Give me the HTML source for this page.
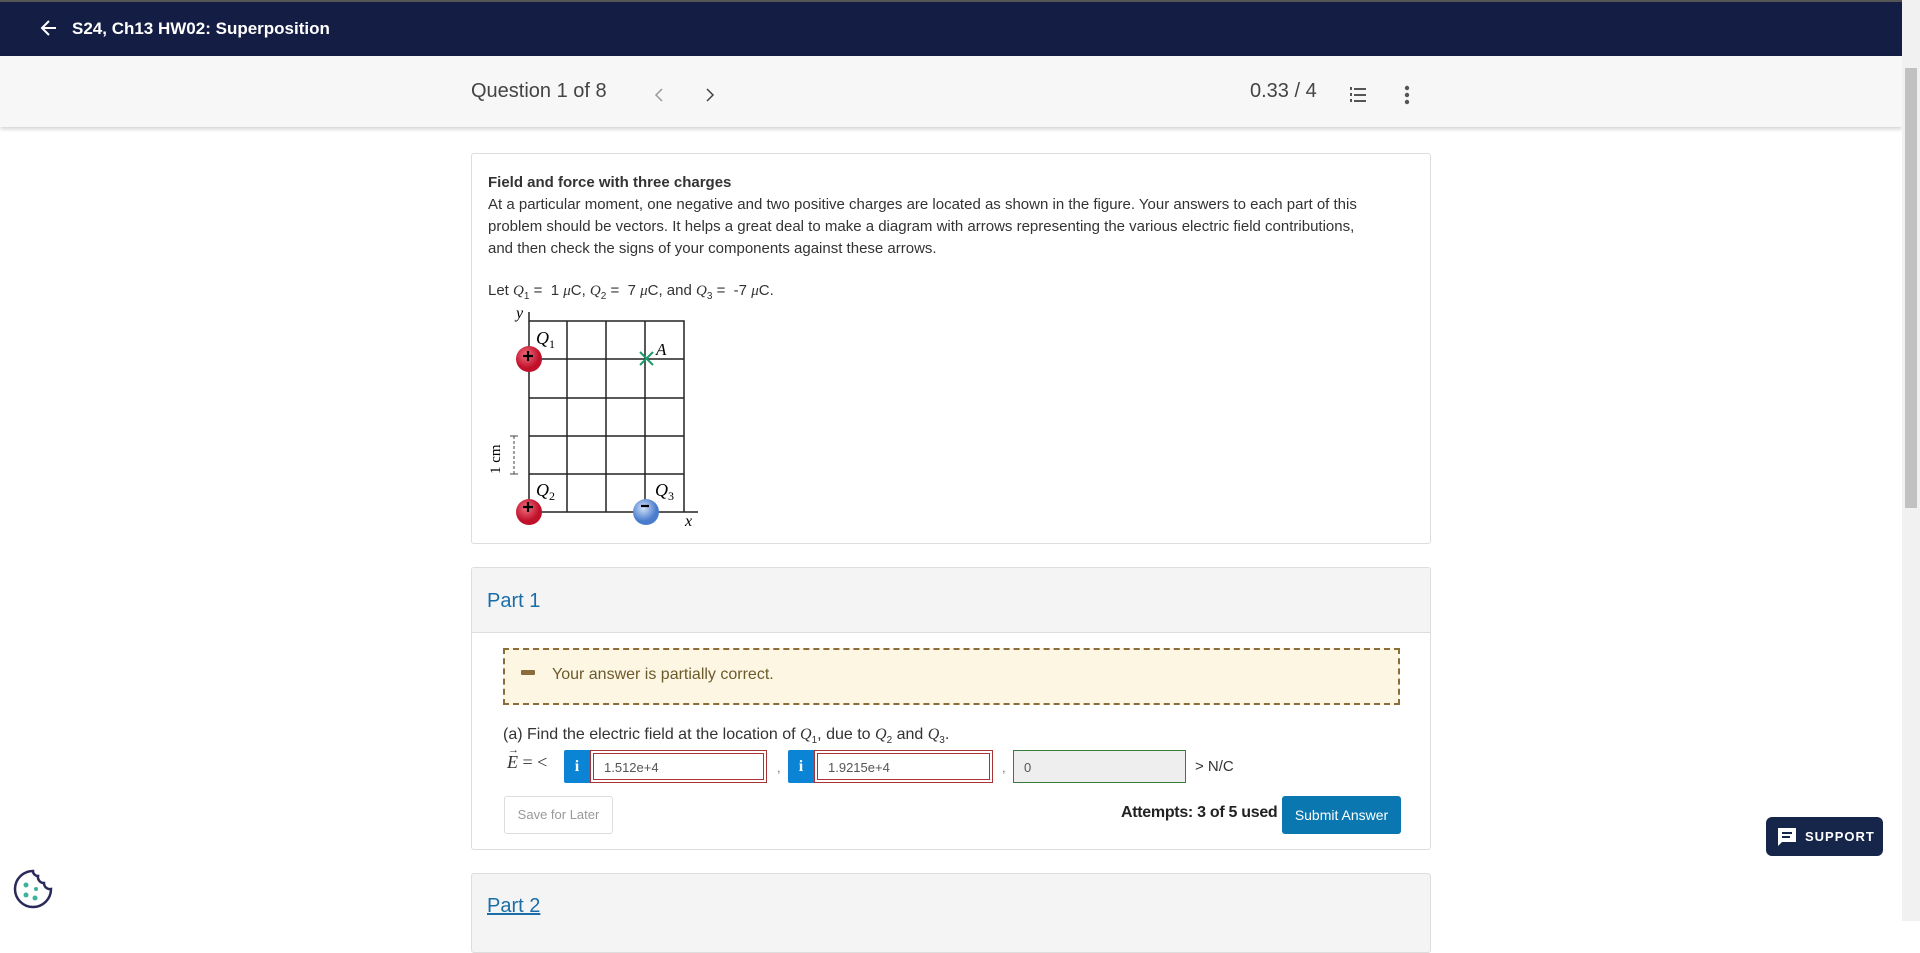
<!DOCTYPE html>
<html><head><meta charset="utf-8"><style>
*{box-sizing:border-box;margin:0;padding:0}
body{width:1920px;height:921px;overflow:hidden;background:#fff;font-family:"Liberation Sans",sans-serif;color:#333;position:relative}
.nav{position:absolute;left:0;top:0;width:1902px;height:56px;background:#141e44;border-top:2px solid #555}
.nav .t{position:absolute;left:72px;top:17px;color:#fff;font-weight:bold;font-size:17px}
.sub{position:absolute;left:0;top:56px;width:1902px;height:71px;background:#f7f7f7;box-shadow:0 2px 4px rgba(0,0,0,.18)}
.sb{position:absolute;right:0;top:0;width:18px;height:921px;background:#f1f1f1}
.sb div{position:absolute;left:3px;top:68px;width:12px;height:440px;background:#c1c1c1}
.card{position:absolute;left:471px;width:960px;border:1px solid #ddd;border-radius:3px;background:#fff}
p{font-size:15px;line-height:22px;color:#333;white-space:nowrap}
.i{font-family:"Liberation Serif",serif;font-style:italic}
.inp{position:absolute;top:750px;height:33px;border:1px solid #a33;padding:2px}
.inp div{border:1px solid #a33;height:100%;font-size:13px;color:#555;padding:6px 0 0 10px}
.info{position:absolute;top:750px;width:26px;height:33px;background:#0b84d6;color:#fff;font-weight:bold;font-family:"Liberation Serif",serif;font-size:16px;text-align:center;line-height:33px;border-radius:2px 0 0 2px}
</style></head><body>
<div class="nav">
<svg style="position:absolute;left:40px;top:17px" width="18" height="18" viewBox="0 0 18 18"><path d="M16 9H3M9 2L2 9l7 7" stroke="#fff" stroke-width="2" fill="none"/></svg>
<div class="t">S24, Ch13 HW02: Superposition</div></div>
<div class="sub">
<div style="position:absolute;left:471px;top:24px;font-size:20px;color:#444">Question 1 of 8</div>
<svg style="position:absolute;left:654px;top:31px" width="10" height="16"><path d="M8 2L2 8l6 6" stroke="#999" stroke-width="1.5" fill="none"/></svg>
<svg style="position:absolute;left:705px;top:31px" width="10" height="16"><path d="M2 2l6 6-6 6" stroke="#444" stroke-width="1.5" fill="none"/></svg>
<div style="position:absolute;left:1250px;top:24px;font-size:20px;color:#444">0.33 / 4</div>
<svg style="position:absolute;left:1349px;top:30px" width="18" height="18" viewBox="0 0 18 18"><g fill="#555"><rect x="5" y="2" width="12" height="2"/><rect x="5" y="8" width="12" height="2"/><rect x="5" y="14" width="12" height="2"/><rect x="1" y="1" width="2" height="3"/><rect x="1" y="7" width="2" height="3"/><rect x="1" y="13" width="2" height="3"/></g></svg>
<svg style="position:absolute;left:1403px;top:28px" width="8" height="22"><circle cx="4" cy="4" r="2.2" fill="#555"/><circle cx="4" cy="11" r="2.2" fill="#555"/><circle cx="4" cy="18" r="2.2" fill="#555"/></svg>
</div>
<div class="sb"><div></div></div>

<div class="card" style="top:153px;height:391px;padding:18px 16px">
<p style="font-weight:bold;margin-top:0">Field and force with three charges</p>
<p>At a particular moment, one negative and two positive charges are located as shown in the figure. Your answers to each part of this<br>problem should be vectors. It helps a great deal to make a diagram with arrows representing the various electric field contributions,<br>and then check the signs of your components against these arrows.</p>
<p style="margin-top:20px">Let <span class="i">Q</span><sub style="font-size:10px">1</sub> = &nbsp;1 <span class="i">μ</span>C, <span class="i">Q</span><sub style="font-size:10px">2</sub> = &nbsp;7 <span class="i">μ</span>C, and <span class="i">Q</span><sub style="font-size:10px">3</sub> = &nbsp;-7 <span class="i">μ</span>C.</p>
</div>
<svg style="position:absolute;left:480px;top:300px" width="240" height="240" viewBox="480 300 240 240">
<defs><radialGradient id="r" cx=".4" cy=".35"><stop offset="0" stop-color="#f07080"/><stop offset="1" stop-color="#c0102a"/></radialGradient>
<radialGradient id="b" cx=".4" cy=".35"><stop offset="0" stop-color="#d0e2fa"/><stop offset="1" stop-color="#4a7ccc"/></radialGradient></defs>
<g stroke="#222" stroke-width="1.5" fill="none">
<path d="M529 312V512H698"/>
<path d="M529 321H684V512M529 359H684M529 398H684M529 436H684M529 474H684M567 321V512M606 321V512M645 321V512"/>
</g>
<path d="M510 436h8M510 474h8" stroke="#444" fill="none"/>
<path d="M514 436v38" stroke="#444" stroke-dasharray="3 2" fill="none"/>
<text x="500" y="474" transform="rotate(-90 500 474)" font-family="Liberation Serif" font-size="15">1 cm</text>
<text x="516" y="318" font-family="Liberation Serif" font-style="italic" font-size="16">y</text>
<text x="685" y="526" font-family="Liberation Serif" font-style="italic" font-size="16">x</text>
<text x="536" y="344" font-family="Liberation Serif" font-style="italic" font-size="18">Q<tspan font-size="12" dy="4" font-style="normal">1</tspan></text>
<text x="536" y="496" font-family="Liberation Serif" font-style="italic" font-size="18">Q<tspan font-size="12" dy="4" font-style="normal">2</tspan></text>
<text x="655" y="496" font-family="Liberation Serif" font-style="italic" font-size="18">Q<tspan font-size="12" dy="4" font-style="normal">3</tspan></text>
<text x="656" y="355" font-family="Liberation Serif" font-style="italic" font-size="17">A</text>
<path d="M640 352l13 13M653 352l-13 13" stroke="#1a9a6a" stroke-width="2"/>
<circle cx="529" cy="359" r="13" fill="url(#r)"/><path d="M523 356h10M528 351v10" stroke="#000" stroke-width="2.2"/>
<circle cx="529" cy="512" r="13" fill="url(#r)"/><path d="M523 507h10M528 502v10" stroke="#000" stroke-width="2.2"/>
<circle cx="646" cy="512" r="13" fill="url(#b)"/><path d="M641 506h8" stroke="#000" stroke-width="2.2"/>
</svg>

<div class="card" style="top:567px;height:283px;overflow:hidden">
<div style="height:65px;background:#f4f4f4;border-bottom:1px solid #ddd;padding:22px 15px;font-size:20px;color:#1a6ea8">Part 1</div>
</div>
<div style="position:absolute;left:503px;top:648px;width:897px;height:57px;background:#fdf6e3;border:2px dashed #8a6d3b"></div>
<div style="position:absolute;left:521px;top:670px;width:14px;height:5px;background:#8a6d3b;border-radius:1px"></div>
<div style="position:absolute;left:552px;top:666px;font-size:16px;color:#6b5a2b">Your answer is partially correct.</div>
<div style="position:absolute;left:503px;top:726px;font-size:16px;color:#333">(a) Find the electric field at the location of <span class="i">Q</span><sub style="font-size:10px">1</sub>, due to <span class="i">Q</span><sub style="font-size:10px">2</sub> and <span class="i">Q</span><sub style="font-size:10px">3</sub>.</div>
<div style="position:absolute;left:507px;top:752px;font-size:18px;font-family:'Liberation Serif',serif"><span class="i">E</span> = &lt;</div>
<div style="position:absolute;left:508px;top:744px;font-size:11px">→</div>
<div class="info" style="left:564px">i</div>
<div class="inp" style="left:590px;width:177px"><div>1.512e+4</div></div>
<div style="position:absolute;left:777px;top:760px;font-size:13px;color:#777">,</div>
<div class="info" style="left:788px">i</div>
<div class="inp" style="left:814px;width:179px"><div>1.9215e+4</div></div>
<div style="position:absolute;left:1002px;top:760px;font-size:13px;color:#777">,</div>
<div style="position:absolute;left:1013px;top:750px;width:173px;height:33px;background:#eee;border:1px solid #3a7a3a;font-size:13px;color:#555;padding:9px 0 0 10px">0</div>
<div style="position:absolute;left:1195px;top:758px;font-size:15px">&gt; N/C</div>
<div style="position:absolute;left:504px;top:796px;width:109px;height:38px;border:1px solid #ddd;border-radius:3px;font-size:13px;color:#999;text-align:center;line-height:36px">Save for Later</div>
<div style="position:absolute;left:1121px;top:804px;font-size:16px;font-weight:bold;color:#222;letter-spacing:-.3px">Attempts: 3 of 5 used</div>
<div style="position:absolute;left:1282px;top:796px;width:119px;height:38px;background:#0a77b0;border-radius:3px;font-size:14px;color:#fff;text-align:center;line-height:38px">Submit Answer</div>

<div class="card" style="top:873px;height:80px;background:#f4f4f4;padding:21px 15px;font-size:20px;color:#1a6ea8"><span style="text-decoration:underline">Part 2</span></div>

<div style="position:absolute;left:1766px;top:817px;width:117px;height:39px;background:#15264a;border-radius:6px;color:#fff;font-size:13px;font-weight:bold;letter-spacing:1px;line-height:39px;padding-left:39px">SUPPORT</div>
<svg style="position:absolute;left:1776px;top:826px" width="22" height="22" viewBox="0 0 22 22"><path d="M2 2h18v14H6l-4 4z" fill="#fff"/><path d="M6 7h10M6 11h8" stroke="#15264a" stroke-width="2"/></svg>
<svg style="position:absolute;left:12px;top:868px" width="42" height="42" viewBox="0 0 42 42"><path d="M21 3a18 18 0 1 0 18 18 6 6 0 0 1-7-6 6 6 0 0 1-6-7 5 5 0 0 1-5-5z" fill="#fff" stroke="#2a2a5a" stroke-width="2.5"/><circle cx="14" cy="17" r="2.5" fill="#3bb39a"/><circle cx="14" cy="27" r="2.5" fill="#3bb39a"/><circle cx="23" cy="30" r="2.5" fill="#3bb39a"/><circle cx="24" cy="21" r="2" fill="#3bb39a"/></svg>
</body></html>
